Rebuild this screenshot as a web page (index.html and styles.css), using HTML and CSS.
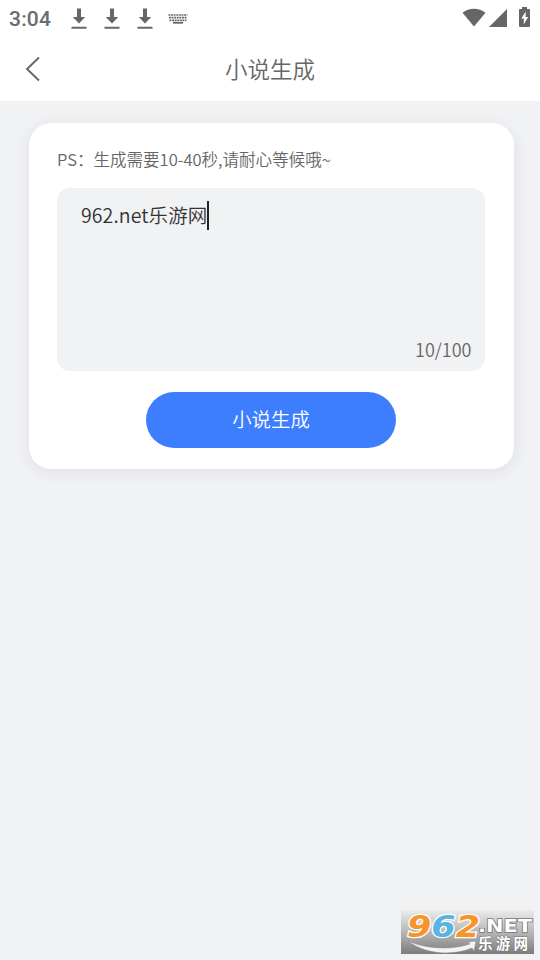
FILE: index.html
```html
<!DOCTYPE html>
<html lang="zh-CN">
<head>
<meta charset="utf-8">
<title>小说生成</title>
<link rel="stylesheet" href="styles.css">
</head>
<body>
<div class="status">
  <span class="time">3:04</span>
  <svg class="download" viewBox="0 0 16 22"><path d="M6 .5h4v8.500h4.200L8 15.500 1.800 9H6zM.5 18.700h15v2H.5z"/></svg>
  <svg class="download" viewBox="0 0 16 22"><path d="M6 .5h4v8.500h4.200L8 15.500 1.800 9H6zM.5 18.700h15v2H.5z"/></svg>
  <svg class="download" viewBox="0 0 16 22"><path d="M6 .5h4v8.500h4.200L8 15.500 1.800 9H6zM.5 18.700h15v2H.5z"/></svg>
  <svg class="keyboard" viewBox="0 0 20 12"><path d="M.5 2h19M1 4.700h18M1.500 7.400h17" stroke-dasharray="1.900 .7"/><path d="M5 9.800h10"/></svg>
  <svg class="signals" viewBox="0 0 70 22"><path d="M1.500 6.700C8 1.300 18 1.300 24.500 6.700L13 20.500zM46 3v18H28zM61 1h5v2h2q1 0 1 1v16q0 1-1 1h-9q-1 0-1-1V4q0-1 1-1h2z"/><path class="bolt" d="M64.800 5.500l-4.500 7h2.500v6l4.300-7.500h-2.500z"/></svg>
</div>
<header class="nav">
  <svg class="back" viewBox="0 0 16 26"><path d="M14 1.500L2 13l12 11.500"/></svg>
  <h1>小说生成</h1>
</header>
<main class="card">
  <p class="hint">PS：生成需要10-40秒,请耐心等候哦~</p>
  <div class="editor">
    <div class="entry"><span>962.net乐游网</span><i class="caret"></i></div>
    <span class="count">10/100</span>
  </div>
  <button class="generate">小说生成</button>
</main>
<svg class="watermark" viewBox="0 0 133 44">
  <defs>
    <linearGradient id="metal" x2="0" y2="1"><stop stop-color="#ececec"/><stop offset=".5" stop-color="#b7b7b7"/><stop offset="1" stop-color="#7c7c7c"/></linearGradient>
  </defs>
  <rect width="133" height="44" fill="url(#metal)"/>
  <path class="swoosh" d="M7 31C22 38 48 41 69 34L67 32 75 31 73 41 71 38C48 47 22 43 7 31z"/>
  <text class="digits" x="6" y="27" textLength="73" lengthAdjust="spacingAndGlyphs"><tspan fill="#f7942b">9</tspan><tspan fill="#58b4e5">6</tspan><tspan fill="#f7942b">2</tspan></text>
  <text class="net" x="77" y="21.500" textLength="54" lengthAdjust="spacingAndGlyphs">.NET</text>
  <text class="site" x="77" y="39" textLength="50">乐游网</text>
</svg>
</body>
</html>
```
FILE: styles.css
```css
* { box-sizing: border-box; }
body {
  margin: 0;
  height: 960px;
  overflow: hidden;
  background: #f1f2f4;
  color: #666;
  font-family: "Noto Sans CJK SC", sans-serif;
  font-weight: 350;
}
.status {
  display: flex;
  align-items: center;
  height: 37px;
  padding: 0 9px 0 9px;
  background: #fff;
}
.time {
  width: 61.500px;
  padding-top: 1px;
  color: #6b6b6b;
  font: 500 21px/37px Roboto, sans-serif;
  letter-spacing: .2px;
}
.download { width: 16px; height: 22px; margin-right: 17px; fill: #666; }
.keyboard { width: 20px; height: 12px; margin-left: -2px; fill: none; stroke: #666; stroke-width: 1.700; }
.signals { width: 70px; height: 22px; margin: -3px 0 0 auto; fill: #666; }
.bolt { fill: #fff; }
.nav {
  display: grid;
  grid-template-columns: 60px 1fr 60px;
  align-items: center;
  height: 64px;
  background: #fff;
}
.back { width: 16px; height: 26px; margin-left: 25px; fill: none; stroke: #666; stroke-width: 1.900; }
h1 { margin: 0; font-size: 22.500px; line-height: 62px; height: 64px; font-weight: 350; text-align: center; }
.card {
  width: 485px;
  height: 346px;
  margin: 22px 0 0 29px;
  padding: 21px 29px 0 28px;
  border-radius: 22px;
  background: #fff;
  box-shadow: 0 3px 16px rgba(30, 40, 70, .09);
}
.hint { margin: 0; height: 44px; font-size: 16.550px; line-height: 30px; white-space: nowrap; }
.editor {
  display: flex;
  flex-direction: column;
  justify-content: space-between;
  height: 183px;
  padding: 13px 13.500px 8px 24px;
  border-radius: 13px;
  background: #f1f2f4;
}
.entry { display: flex; color: #333; font-size: 19.500px; line-height: 27px; letter-spacing: .1px; }
.caret { width: 2px; height: 29px; background: #222; }
.count { align-self: flex-end; font-size: 18px; line-height: 28px; }
.generate {
  display: block;
  width: 250px;
  height: 56px;
  margin: 21px auto 0;
  padding: 0 0 2px;
  border: 0;
  border-radius: 28px;
  background: #3d7eff;
  color: #fff;
  font: 350 19.400px/54px "Noto Sans CJK SC", sans-serif;
}
.watermark { position: absolute; left: 401px; top: 910px; width: 133px; height: 44px; }
.digits { font: italic 700 31px "DejaVu Sans", sans-serif; stroke: #fff; stroke-width: 2.500; paint-order: stroke; }
.net { font: 700 18px "DejaVu Sans", sans-serif; fill: #fff; stroke: #777; stroke-width: 1.500; paint-order: stroke; }
.swoosh { fill: #f4f4f4; stroke: #888; stroke-width: .5; }
.site { font: 700 14.500px "Noto Sans CJK SC", sans-serif; fill: #fff; stroke: #777; stroke-width: 1; paint-order: stroke; }
```
